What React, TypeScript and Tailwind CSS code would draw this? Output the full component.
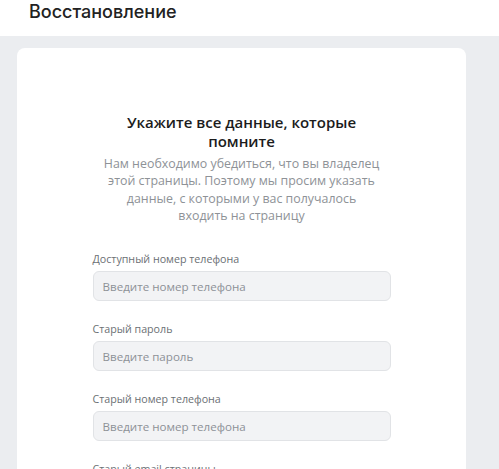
const fields = [
  { label: "Доступный номер телефона", placeholder: "Введите номер телефона" },
  { label: "Старый пароль", placeholder: "Введите пароль" },
  { label: "Старый номер телефона", placeholder: "Введите номер телефона" },
  { label: "Старый email страницы", placeholder: "Введите email" },
];

const App = () => {
  return (
    <div className="min-h-screen bg-[#ebedf0] font-['Open_Sans',sans-serif]">
      {/* Header */}
      <div className="h-[36px] bg-white px-[29px] flex items-center">
        <h1 className="font-['Inter',sans-serif] text-[18px] font-medium text-[#222222] -mt-[13px]">
          Восстановление
        </h1>
      </div>

      {/* Card */}
      <div className="ml-[17px] mt-[12px] w-[449px] bg-white rounded-lg pt-[65px] pb-10">
        <h2 className="text-center text-[15px] leading-[19px] font-semibold text-[#1c1c1c]">
          Укажите все данные, которые
          <br />
          помните
        </h2>
        <p className="mt-[4px] text-center text-[12.4px] leading-[17.3px] text-[#8e9297]">
          Нам необходимо убедиться, что вы владелец
          <br />
          этой страницы. Поэтому мы просим указать
          <br />
          данные, с которыми у вас получалось
          <br />
          входить на страницу
        </p>

        <div className="mx-auto mt-[28px] w-[298px] flex flex-col gap-[21px]">
          {fields.map((f) => (
            <div key={f.label}>
              <label className="block text-[10.7px] leading-[14px] text-[#6b6f74] mb-[5px]">
                {f.label}
              </label>
              <input
                type="text"
                placeholder={f.placeholder}
                className="w-full h-[30px] bg-[#f2f3f5] border border-[#e1e3e6] rounded-md px-[9px] text-[11.6px] text-[#222] placeholder:text-[#8d9197] focus:outline-none"
              />
            </div>
          ))}
        </div>
      </div>
    </div>
  );
};

export default App;
